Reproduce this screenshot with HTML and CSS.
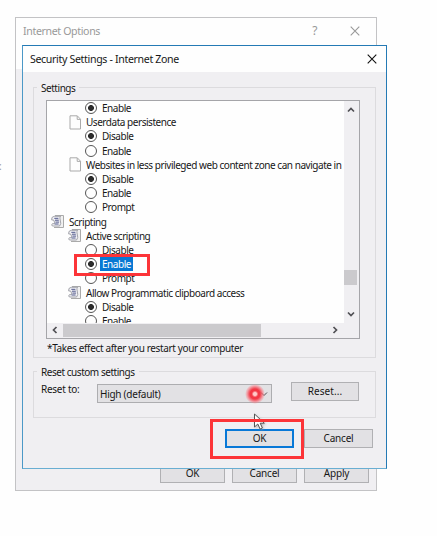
FILE: index.html
```html
<!DOCTYPE html>
<html lang="en">
<head>
<meta charset="utf-8">
<title>Internet Options</title>
<link rel="stylesheet" href="styles.css">
</head>
<body>
<svg width="0" height="0" class="defs">
  <symbol id="page" viewBox="0 0 13 15"><path d="M1 .8H8.3L11.5 4.2V14H1Z" fill="#fdfdfd" stroke="#aaa"/><path d="M8.2 1V4.4H11.5" fill="none" stroke="#aaa"/></symbol>
  <symbol id="script" viewBox="0 0 15 15"><path d="M5 1.5H13.5V13.5H4" fill="#f1f1f1" stroke="#aaa"/><path d="M4.2 2.3H10.6Q9.3 3.5 10.2 6Q11.6 9.8 9.6 12H2.4Q1 11 2.4 9.7H4.4Q5 8.5 3.6 6H1.7Q1 2.8 4.2 2.3Z" fill="#f4f4f7" stroke="#999aa1" stroke-width=".9"/><path d="M4.3 4.3H8.4M5 6.2H8.8M5.4 8.1H9.1M4.6 10H8.6" stroke="#4d5589" stroke-width="1"/></symbol>
</svg>
<div class="desktop">
  <span class="edge">:</span>
  <section class="window back">
    <header class="bar"><span class="caption">Internet Options</span><span class="help">?</span>
      <svg class="close" viewBox="0 0 10 10"><path d="M.7 .7L9.3 9.3M9.3 .7L.7 9.3"/></svg></header>
    <footer class="back-actions"><button>OK</button><button>Cancel</button><button>Apply</button></footer>
  </section>
  <section class="window front">
    <header class="bar"><span class="caption">Security Settings - Internet Zone</span>
      <svg class="close" viewBox="0 0 10 10"><path d="M.7 .7L9.3 9.3M9.3 .7L.7 9.3"/></svg></header>
    <div class="group settings">
      <span class="legend">Settings</span>
      <div class="list">
        <div class="rows">
          <div class="row option"><i class="radio on"></i><span>Enable</span></div>
          <div class="row item"><svg class="page"><use href="#page"/></svg><span>Userdata persistence</span></div>
          <div class="row option"><i class="radio on"></i><span>Disable</span></div>
          <div class="row option"><i class="radio"></i><span>Enable</span></div>
          <div class="row item"><svg class="page"><use href="#page"/></svg><span>Websites in less privileged web content zone can navigate in</span></div>
          <div class="row option"><i class="radio on"></i><span>Disable</span></div>
          <div class="row option"><i class="radio"></i><span>Enable</span></div>
          <div class="row option"><i class="radio"></i><span>Prompt</span></div>
          <div class="row root"><svg class="script"><use href="#script"/></svg><span>Scripting</span></div>
          <div class="row item"><svg class="script"><use href="#script"/></svg><span>Active scripting</span></div>
          <div class="row option"><i class="radio"></i><span>Disable</span></div>
          <div class="row option"><i class="radio on"></i><span class="selected">Enable</span></div>
          <div class="row option"><i class="radio"></i><span>Prompt</span></div>
          <div class="row item"><svg class="script"><use href="#script"/></svg><span>Allow Programmatic clipboard access</span></div>
          <div class="row option"><i class="radio on"></i><span>Disable</span></div>
          <div class="row option"><i class="radio"></i><span>Enable</span></div>
        </div>
        <div class="vscroll"><svg viewBox="0 0 8 6"><path d="M1 4.5L4 1.5L7 4.5"/></svg><b></b><svg viewBox="0 0 8 6"><path d="M1 1.5L4 4.5L7 1.5"/></svg></div>
        <div class="hscroll"><svg viewBox="0 0 6 8"><path d="M4.5 1L1.5 4L4.5 7"/></svg><b></b><svg viewBox="0 0 6 8"><path d="M1.5 1L4.5 4L1.5 7"/></svg></div>
      </div>
      <p class="note">*Takes effect after you restart your computer</p>
    </div>
    <div class="group reset">
      <span class="legend">Reset custom settings</span>
      <div class="reset-row"><span class="label">Reset to:</span>
        <div class="select"><span>High (default)</span><svg viewBox="0 0 8 6"><path d="M1 1.5L4 4.5L7 1.5"/></svg></div>
        <button>Reset...</button></div>
    </div>
    <footer class="actions"><button class="primary">OK</button><button>Cancel</button></footer>
  </section>
  <div class="mark mark-enable"></div>
  <div class="click"></div>
  <svg class="cursor" viewBox="0 0 13 18"><path d="M1.5 1V14L4.8 11L7.1 16L9.4 15L7.2 10.2H11.3Z"/></svg>
  <div class="mark mark-ok"></div>
</div>
</body>
</html>
```
FILE: styles.css
```css
* { box-sizing: border-box; }
body { margin: 0; background: #fefefe; color: #171717; font: 10px/14px "Noto Sans", sans-serif; letter-spacing: -.46px; }
.defs { position: absolute; }
.desktop { position: relative; width: 437px; height: 536px; overflow: hidden; }
.edge { position: absolute; left: -1px; top: 159px; color: #999; }
.window { position: absolute; background: #f0eff2; white-space: nowrap; }
.back { left: 15px; top: 17px; width: 362px; height: 474px; border: 1px solid #c3c3c5; display: flex; flex-direction: column; justify-content: space-between; }
.front { left: 22px; top: 45px; width: 365px; height: 424px; border: 1px solid #247ab5; border-left-color: #4b98c7; border-bottom-color: #69aed2; }
.bar { display: flex; align-items: center; background: #fefefe; }
.back .bar { height: 51px; padding: 0 16px 25px 7px; color: #999; font-size: 10.6px; letter-spacing: -.36px; }
.back .help { margin-left: auto; margin-right: 33px; font-size: 12px; }
.front .bar { height: 26px; padding: 0 9px 0 7px; font-size: 10.6px; letter-spacing: -.34px; }
.front .close { margin-left: auto; }
.close { width: 10px; height: 10px; fill: none; stroke: #111; stroke-width: 1.1; }
.back .close { stroke: #999; }
button { font: inherit; letter-spacing: -.2px; color: inherit; background: #e2e1e4; border: 1px solid #b0b0b3; padding: 0; width: 69px; height: 19px; line-height: 17px; }
.back-actions { display: flex; gap: 7px; padding: 0 7px 7px 0; justify-content: flex-end; }
.back-actions button { width: 65px; height: 20px; }
.group { border: 1px solid #dcdbde; margin-left: 10px; width: 343px; }
.legend { display: block; width: max-content; margin: -7px 0 0 3px; padding: 0 4px; background: #f0eff2; height: 14px; }
.settings { margin-top: 15px; height: 271px; }
.list { width: 314px; height: 239px; margin: 5px 0 0 12px; border: 1px solid #a5a5a9; background: #f0eff2; display: grid; grid-template-columns: 297px 13px; grid-template-rows: 222px 15px; }
.rows { background: #fefefe; overflow: hidden; }
.row { height: 14.2px; display: flex; align-items: center; line-height: 14px; }
.root { padding-left: 3px; }
.item { padding-left: 20px; }
.option { padding-left: 38px; }
.radio { flex: none; width: 12px; height: 12px; border: 1px solid #555; border-radius: 50%; margin-right: 3px; background: #fefefe; }
.radio.on { background: radial-gradient(circle, #2b2b2b 2.6px, #fefefe 3.3px); }
.option span { padding: 0 2px; }
.selected { background: #0878d3; color: #fff; }
.page { flex: none; width: 13px; height: 15px; margin: 0 4px 0 2px; }
.script { flex: none; width: 15px; height: 15px; margin-right: 4px; }
.vscroll { display: flex; flex-direction: column; align-items: center; padding: 6px 0; }
.vscroll svg { width: 8px; height: 6px; }
.vscroll b { width: 13px; height: 15px; background: #cbcacd; margin: 157px 0 auto; }
.hscroll { grid-column: 1 / 3; display: flex; align-items: center; padding: 0 19px 1px 5px; }
.hscroll svg { width: 6px; height: 8px; }
.hscroll b { width: 198px; height: 13px; background: #cbcacd; margin: 0 auto 0 5px; }
.vscroll svg, .hscroll svg, .select svg { fill: none; stroke: #505054; stroke-width: 1.7; }
.note { margin: 2px 0 0 13px; letter-spacing: -.36px; }
.reset { margin-top: 13px; height: 47px; }
.reset-row { display: flex; padding: 3px 0 0 7px; letter-spacing: -.26px; }
.label { width: 56px; }
.select { width: 175px; height: 19px; margin-top: 2px; border: 1px solid #adadb0; background: #e2e1e4; padding: 0 3px 0 2px; display: flex; align-items: center; justify-content: space-between; }
.select svg { width: 8px; height: 6px; stroke-width: 1; }
.reset button { margin-left: 19px; width: 68px; letter-spacing: .1px; }
.actions { display: flex; gap: 10px; padding: 11px 13px 0 0; justify-content: flex-end; }
.primary { border: 2px solid #0878d7; line-height: 15px; }
.mark { position: absolute; border: 3px solid #fc3438; }
.mark-enable { left: 74px; top: 254px; width: 76px; height: 22px; }
.mark-ok { left: 210px; top: 419px; width: 94px; height: 40px; }
.click { position: absolute; left: 245px; top: 384px; width: 20px; height: 20px; border-radius: 50%; background: radial-gradient(circle, #ffc9c9 0 1.5px, #f33745 3.3px 5px, #fa7b8599 8px, #fa7b8500 10px); }
.cursor { position: absolute; left: 253px; top: 413px; width: 13px; height: 18px; fill: #fff; stroke: #555; filter: drop-shadow(1px 1px 1px #9999); }
```
